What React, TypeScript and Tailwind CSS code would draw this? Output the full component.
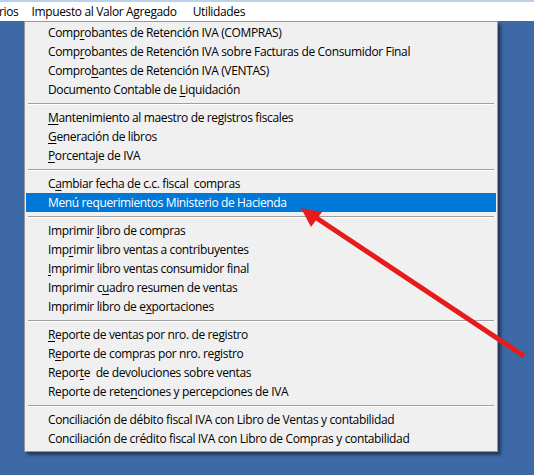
import React from "react";

type Item = { pre: string; u?: string; post?: string; hl?: boolean } | "sep";

const items: Item[] = [
  { pre: "Comp", u: "r", post: "obantes de Retención IVA (COMPRAS)" },
  { pre: "Comp", u: "r", post: "obantes de Retención IVA sobre Facturas de Consumidor Final" },
  { pre: "Compro", u: "b", post: "antes de Retención IVA (VENTAS)" },
  { pre: "Documento Contable de ", u: "L", post: "iquidación" },
  "sep",
  { pre: "", u: "M", post: "antenimiento al maestro de registros fiscales" },
  { pre: "", u: "G", post: "eneración de libros" },
  { pre: "", u: "P", post: "orcentaje de IVA" },
  "sep",
  { pre: "C", u: "a", post: "mbiar fecha de c.c. fiscal  compras" },
  { pre: "Menú requerimientos Ministerio de Hacienda", hl: true },
  "sep",
  { pre: "Imprimir ", u: "l", post: "ibro de compras" },
  { pre: "Imp", u: "r", post: "imir libro ventas a contribuyentes" },
  { pre: "", u: "I", post: "mprimir libro ventas consumidor final" },
  { pre: "Imprimir c", u: "u", post: "adro resumen de ventas" },
  { pre: "Imprimir libro de e", u: "x", post: "portaciones" },
  "sep",
  { pre: "", u: "R", post: "eporte de ventas por nro. de registro" },
  { pre: "R", u: "e", post: "porte de compras por nro. registro" },
  { pre: "Repor", u: "t", post: "e  de devoluciones sobre ventas" },
  { pre: "Reporte de rete", u: "n", post: "ciones y percepciones de IVA" },
  "sep",
  { pre: "Conciliación de débito fiscal IVA con Libro de Ventas y contabilidad" },
  { pre: "Conciliación de crédito fiscal IVA con Libro de Compras y contabilidad" },
];

export default function App() {
  return (
    <div
      className="relative w-[534px] h-[475px] overflow-hidden bg-[#3e69a7] text-[12px] text-black tracking-[-0.36px]"
      style={{ fontFamily: '"Open Sans", "Noto Sans", sans-serif' }}
    >
      <div className="h-[2px] bg-[#b9d1ea]" />
      <div className="h-[19px] bg-white flex items-center whitespace-pre">
        <span className="ml-[-1px]">rios</span>
        <span className="ml-[13px]">Impuesto al Valor Agregado</span>
        <span className="ml-[16px]">Utilidades</span>
      </div>

      <div className="absolute left-[24px] top-[21px] w-[474px] border border-[#979797] bg-[#f0f0f0] pt-[1px] pb-[3px] shadow-[3px_3px_3px_rgba(0,0,0,0.45)]">
        {items.map((it, i) =>
          it === "sep" ? (
            <div key={i} className="h-[9px] flex flex-col justify-center px-[3px]">
              <div className="h-px bg-[#a0a0a0]" />
              <div className="h-px bg-white" />
            </div>
          ) : (
            <div
              key={i}
              className={
                "h-[19px] mx-[1px] flex items-center pl-[22px] whitespace-pre " +
                (it.hl ? "bg-[#0078d7] text-white" : "")
              }
            >
              <span>
                {it.pre}
                {it.u ? <span className="underline underline-offset-[2px]">{it.u}</span> : null}
                {it.post}
              </span>
            </div>
          )
        )}
      </div>

      <svg className="absolute left-0 top-0 pointer-events-none" width="534" height="475">
        <line x1="524" y1="356" x2="312" y2="215" stroke="#e61c1c" strokeWidth="5" />
        <polygon points="301,208 322,212 311,227" fill="#e61c1c" />
      </svg>
    </div>
  );
}
